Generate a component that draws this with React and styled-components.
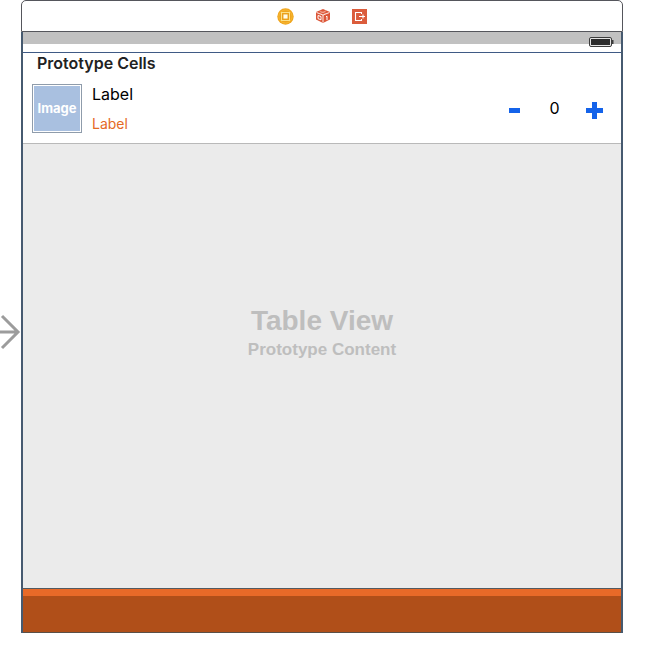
import React from "react";
import styled, { createGlobalStyle } from "styled-components";

const App = () => (
  <Page>
    <GlobalStyle />
    <EntryPoint>
      <ArrowIcon />
    </EntryPoint>
    <Scene>
      <Dock>
        <ControllerIcon />
        <ResponderIcon />
        <ExitIcon />
      </Dock>
      <Screen>
        <StatusBar>
          <BatteryIcon />
        </StatusBar>
        <TableView>
          <SectionTitle>Prototype Cells</SectionTitle>
          <Cell>
            <Thumbnail>Image</Thumbnail>
            <Labels>
              <Title>Label</Title>
              <Price>Label</Price>
            </Labels>
            <Stepper>
              <StepButton type="button" aria-label="Decrease">
                <svg width="17" height="17" viewBox="0 0 17 17">
                  <path d="M3 6h11v5H3z" fill="currentColor" />
                </svg>
              </StepButton>
              <Quantity>0</Quantity>
              <StepButton type="button" aria-label="Increase">
                <svg width="17" height="17" viewBox="0 0 17 17">
                  <path d="M6 0h5v6h6v5h-6v6H6v-6H0V6h6z" fill="currentColor" />
                </svg>
              </StepButton>
            </Stepper>
          </Cell>
          <Placeholder>
            <PlaceholderTitle>Table View</PlaceholderTitle>
            <PlaceholderText>Prototype Content</PlaceholderText>
          </Placeholder>
        </TableView>
        <Toolbar />
      </Screen>
    </Scene>
  </Page>
);

const ArrowIcon = () => (
  <svg width="21" height="36" viewBox="0 0 21 36" aria-hidden="true">
    <path d="M0 18h18M2 2l16 16L2 34" fill="none" stroke="#9c9c9c" strokeWidth="3" />
  </svg>
);

const ControllerIcon = () => (
  <svg width="17" height="17" viewBox="0 0 17 17" aria-hidden="true">
    <circle cx="8.5" cy="8.5" r="8.2" fill="#f0a51d" />
    <circle cx="8.5" cy="8.5" r="6.6" fill="none" stroke="#f6bd3c" strokeWidth="0.8" />
    <rect x="4.5" y="4.5" width="8" height="8" fill="none" stroke="#fbe08a" strokeWidth="1" />
    <rect x="6" y="6" width="5" height="5" fill="#fffbe6" stroke="#e39a14" strokeWidth="0.8" />
  </svg>
);

const ResponderIcon = () => (
  <svg width="16" height="16" viewBox="0 0 16 16" aria-hidden="true">
    <path d="M1 4l7-3 7 3v7.5L8 15l-7-3.5z" fill="#dc5638" />
    <path d="M1.5 4.5L8 7l6.5-2.5M8 7v7.5" fill="none" stroke="#fff" strokeWidth="0.9" />
    <path d="M4.5 3l6.5 2.6M11 2.9L4.7 5.5" fill="none" stroke="#f4b8a6" strokeWidth="0.7" />
    <path d="M3 7.5l3 1v3.3l-3-1.2zM11 8.8l1-0.6v3.9" fill="none" stroke="#fff" strokeWidth="1" />
  </svg>
);

const ExitIcon = () => (
  <svg width="15" height="15" viewBox="0 0 15 15" aria-hidden="true">
    <rect width="15" height="15" fill="#db5c3c" />
    <path
      d="M9.5 5V3.5h-6v8h6V10M7 7.5h6M11 5.5v4"
      fill="none"
      stroke="#fff"
      strokeWidth="1.1"
    />
  </svg>
);

const BatteryIcon = () => (
  <svg width="25" height="10" viewBox="0 0 25 10" aria-hidden="true">
    <rect x="0.5" y="0.5" width="22" height="9" rx="1.5" fill="#e4e4e4" stroke="#3c3c3c" />
    <rect x="2" y="2" width="19" height="6" fill="#2b2b2b" />
    <path d="M23 3h1.5v4H23z" fill="#3c3c3c" />
  </svg>
);

const GlobalStyle = createGlobalStyle`
  * {
    box-sizing: border-box;
  }

  body {
    margin: 0;
    background: #fff;
    font-family: Inter, "Liberation Sans", sans-serif;
  }
`;

const Page = styled.main`
  display: flex;
  min-height: 100vh;
  padding: 0 26px 12px 0;
`;

const EntryPoint = styled.div`
  display: flex;
  align-items: center;
  width: 21px;
  padding-top: 31px;
`;

const Scene = styled.section`
  display: flex;
  flex-direction: column;
  flex: 1;
`;

const Dock = styled.header`
  display: flex;
  justify-content: center;
  align-items: center;
  gap: 21px;
  height: 32px;
  border: 1px solid #55565c;
  border-radius: 5px 5px 0 0;
`;

const Screen = styled.div`
  display: flex;
  flex-direction: column;
  flex: 1;
  border: solid #465a70;
  border-width: 0 2px;
`;

const StatusBar = styled.div`
  display: flex;
  justify-content: flex-end;
  align-items: flex-end;
  height: 20px;
  padding: 0 7px 5px;
  background: linear-gradient(#c1c1c1 12px, #fff 12px);
`;

const TableView = styled.div`
  display: flex;
  flex-direction: column;
  flex: 1;
  border-top: 1px solid #3f5a85;
  border-bottom: 1px solid #535a60;
`;

const SectionTitle = styled.h2`
  margin: 0;
  padding-left: 14px;
  font-size: 16px;
  line-height: 20px;
  font-weight: 600;
  color: #222;
`;

const Cell = styled.div`
  display: flex;
  align-items: center;
  height: 71px;
  padding: 0 18px 0 9px;
  border-bottom: 1px solid #b9b9b9;
`;

const Thumbnail = styled.div`
  display: flex;
  justify-content: center;
  align-items: center;
  width: 50px;
  height: 49px;
  border: 1px solid #8f9cab;
  box-shadow: inset 0 0 0 1px #fff;
  background: #a9c0e0;
  color: #fff;
  font-size: 13px;
  font-weight: 700;
`;

const Labels = styled.div`
  display: flex;
  flex-direction: column;
  gap: 10px;
  flex: 1;
  padding: 2px 0 0 10px;
`;

const Title = styled.span`
  font-size: 16px;
  line-height: 20px;
  color: #000;
`;

const Price = styled(Title)`
  font-size: 14px;
  color: #e56a25;
`;

const Stepper = styled.div`
  display: flex;
  align-items: center;
`;

const StepButton = styled.button`
  display: flex;
  padding: 4px 0 0;
  border: 0;
  background: none;
  color: #1463ea;
  cursor: pointer;
`;

const Quantity = styled.output`
  width: 63px;
  font-size: 16px;
  line-height: 20px;
  text-align: center;
`;

const Placeholder = styled.div`
  display: flex;
  flex-direction: column;
  justify-content: center;
  align-items: center;
  flex: 1;
  padding-bottom: 66px;
  background: #ebebeb;
  color: #bebebe;
  font-family: "Liberation Sans", Arial, sans-serif;
  font-weight: 700;
`;

const PlaceholderTitle = styled.div`
  font-size: 28px;
  line-height: 34px;
`;

const PlaceholderText = styled.div`
  font-size: 17px;
  line-height: 24px;
`;

const Toolbar = styled.footer`
  height: 44px;
  border-top: 7px solid #e86a28;
  border-bottom: 1px solid #5a5048;
  background: #b04f19;
`;

export default App;
